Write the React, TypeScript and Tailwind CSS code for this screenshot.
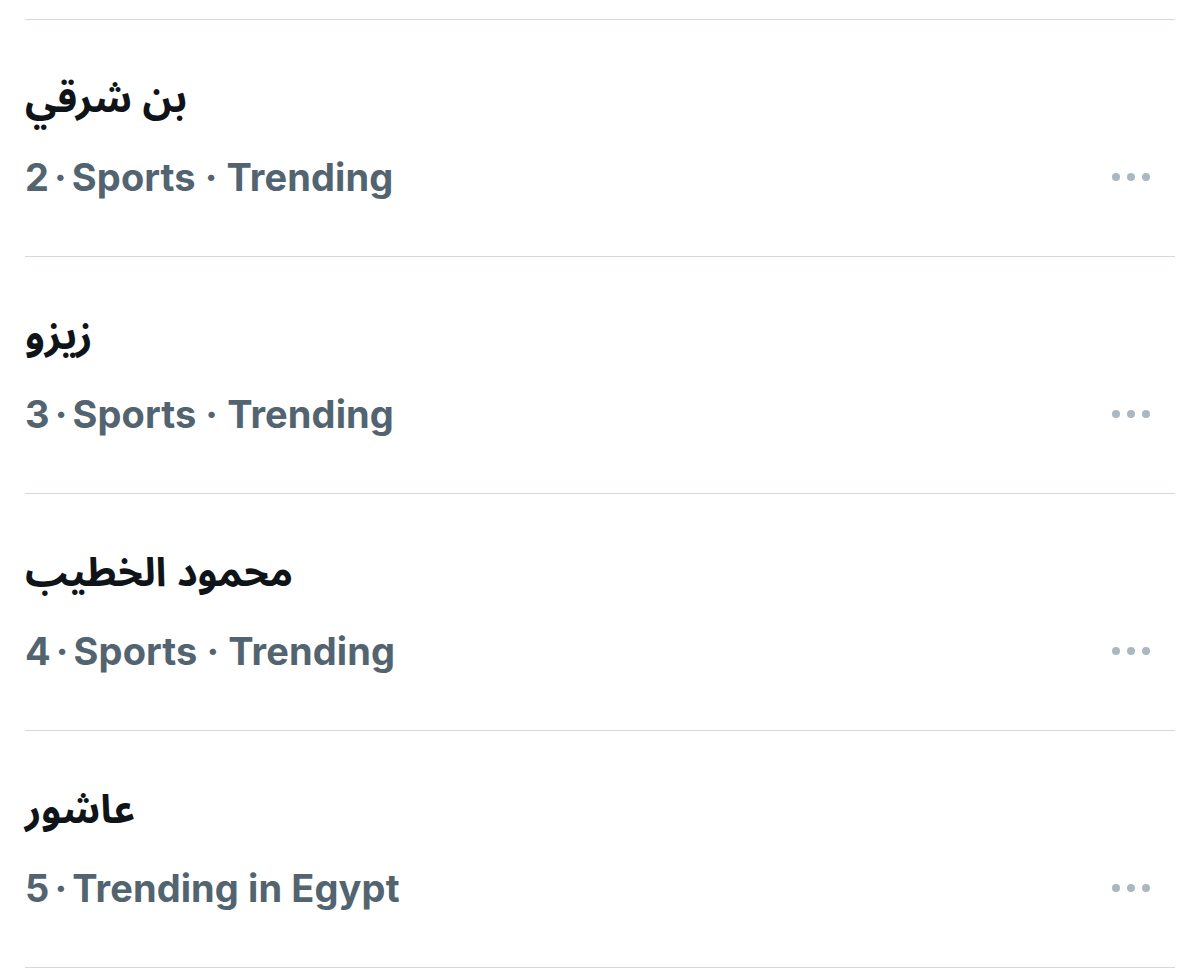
const trends = [
  { title: 'بن شرقي', meta: ['2', 'Sports', 'Trending'] },
  { title: 'زيزو', meta: ['3', 'Sports', 'Trending'] },
  { title: 'محمود الخطيب', meta: ['4', 'Sports', 'Trending'] },
  { title: 'عاشور', meta: ['5', 'Trending in Egypt'] },
];

function MoreDots() {
  return (
    <div className="flex items-center gap-[7px]">
      <span className="w-2 h-2 rounded-full bg-[#aab8c2]" />
      <span className="w-2 h-2 rounded-full bg-[#aab8c2]" />
      <span className="w-2 h-2 rounded-full bg-[#aab8c2]" />
    </div>
  );
}

export default function App() {
  return (
    <div className="w-[1200px] h-[973px] bg-white overflow-hidden px-[25px] pt-[19px]">
      <div className="border-t border-[#cfd9de]">
        {trends.map((t) => (
          <div key={t.title} className="border-b border-[#cfd9de] h-[237px] pt-[56px]">
            <div
              className="text-[40px] leading-[48px] font-bold text-[#0f1419] text-left"
              style={{ fontFamily: '"Noto Sans Arabic", "DejaVu Sans", sans-serif' }}
            >
              {t.title}
            </div>
            <div className="mt-[29px] flex items-center justify-between">
              <div className="text-[38px] leading-[48px] font-bold text-[#536471] font-['Inter',sans-serif] tracking-[0.1px]">
                {t.meta.map((m, i) => (
                  <span key={i}>
                    {i > 0 && <span className={i === 1 ? 'mx-[5px]' : 'mx-[9px]'}>·</span>}
                    {m}
                  </span>
                ))}
              </div>
              <div className="mr-[25px]">
                <MoreDots />
              </div>
            </div>
          </div>
        ))}
      </div>
    </div>
  );
}
